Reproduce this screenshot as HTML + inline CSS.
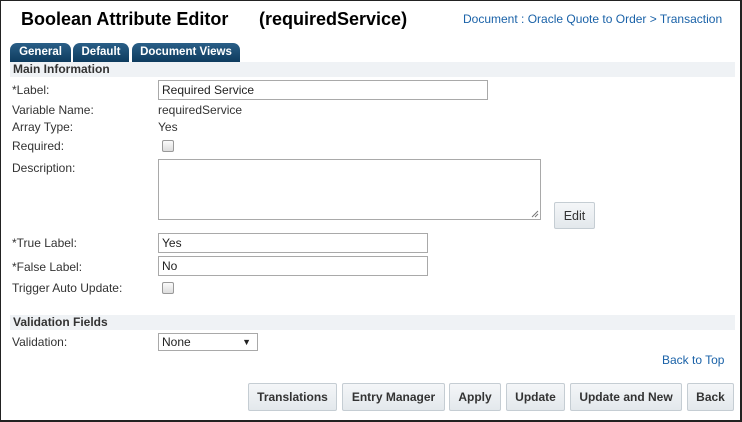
<!DOCTYPE html>
<html><head><meta charset="utf-8"><style>
*{box-sizing:border-box;margin:0;padding:0}
body{width:742px;height:422px;position:relative;background:#fff;font-family:"Liberation Sans",Arial,sans-serif;font-size:12px;color:#333;overflow:hidden}
#frame{position:absolute;left:0;top:0;width:742px;height:422px;border:1px solid #222;border-right-width:2px;border-bottom-width:2px}
.a{position:absolute;white-space:nowrap}
.t{font-size:18px;font-weight:bold;color:#000}
.tab{position:absolute;top:43px;height:19px;border-radius:7px 7px 0 0;background:linear-gradient(#2a5f87,#0e3b5e);color:#fff;font-weight:bold;font-size:11.5px;text-align:center;line-height:18px}
.bar{position:absolute;left:10px;width:725px;height:15px;background:#eff2f5;font-weight:bold;font-size:12px;color:#333;padding-left:3px;line-height:15px}
.in{position:absolute;height:20px;border:1px solid #a9a9a9;background:#fff;padding-left:3px;line-height:18px;font-size:12px;color:#222}
.cb{position:absolute;width:12px;height:12px;border:1px solid #999;border-radius:2px;background:linear-gradient(#fafafa,#ddd)}
.btn{position:absolute;top:383px;height:28px;border:1px solid #c5cdd3;background:linear-gradient(#f4f6f8,#e3e8ec);font-weight:bold;font-size:12px;color:#333;text-align:center;line-height:27px;border-radius:2px}
a{color:#1a62a8;text-decoration:none}
</style></head><body>
<div id="frame"></div>
<div class="a t" style="left:21px;top:9px">Boolean Attribute Editor</div>
<div class="a t" style="left:259px;top:9px">(requiredService)</div>
<div class="a" style="left:463px;top:12px;color:#1a62a8">Document : Oracle Quote to Order &gt; Transaction</div>
<div class="tab" style="left:10px;width:61px">General</div>
<div class="tab" style="left:73px;width:56px">Default</div>
<div class="tab" style="left:132px;width:108px">Document Views</div>
<div class="bar" style="top:62px">Main Information</div>
<div class="a" style="left:12px;top:83px">*Label:</div>
<div class="in" style="left:158px;top:80px;width:330px">Required Service</div>
<div class="a" style="left:12px;top:103px">Variable Name:</div>
<div class="a" style="left:158px;top:103px">requiredService</div>
<div class="a" style="left:12px;top:120px">Array Type:</div>
<div class="a" style="left:158px;top:120px">Yes</div>
<div class="a" style="left:12px;top:139px">Required:</div>
<div class="cb" style="left:162px;top:140px"></div>
<div class="a" style="left:12px;top:161px">Description:</div>
<div class="in" style="left:158px;top:159px;width:383px;height:61px"></div>
<svg class="a" style="left:531px;top:210px" width="8" height="8"><path d="M1 7L7 1M4 7L7 4" stroke="#777"/></svg>
<div class="btn" style="left:554px;top:202px;width:41px;height:27px;font-weight:normal;font-size:12.5px">Edit</div>
<div class="a" style="left:12px;top:236px">*True Label:</div>
<div class="in" style="left:158px;top:233px;width:270px">Yes</div>
<div class="a" style="left:12px;top:260px">*False Label:</div>
<div class="in" style="left:158px;top:256px;width:270px">No</div>
<div class="a" style="left:12px;top:281px">Trigger Auto Update:</div>
<div class="cb" style="left:162px;top:282px"></div>
<div class="bar" style="top:315px">Validation Fields</div>
<div class="a" style="left:12px;top:335px">Validation:</div>
<div class="in" style="left:158px;top:333px;width:100px;height:18px;line-height:16px">None<span style="position:absolute;right:6px;font-size:9px">▼</span></div>
<div class="a" style="left:662px;top:353px"><a>Back to Top</a></div>
<div class="btn" style="left:248px;width:89px">Translations</div>
<div class="btn" style="left:342px;width:103px">Entry Manager</div>
<div class="btn" style="left:449px;width:52px">Apply</div>
<div class="btn" style="left:506px;width:59px">Update</div>
<div class="btn" style="left:570px;width:112px">Update and New</div>
<div class="btn" style="left:687px;width:47px">Back</div>
</body></html>
